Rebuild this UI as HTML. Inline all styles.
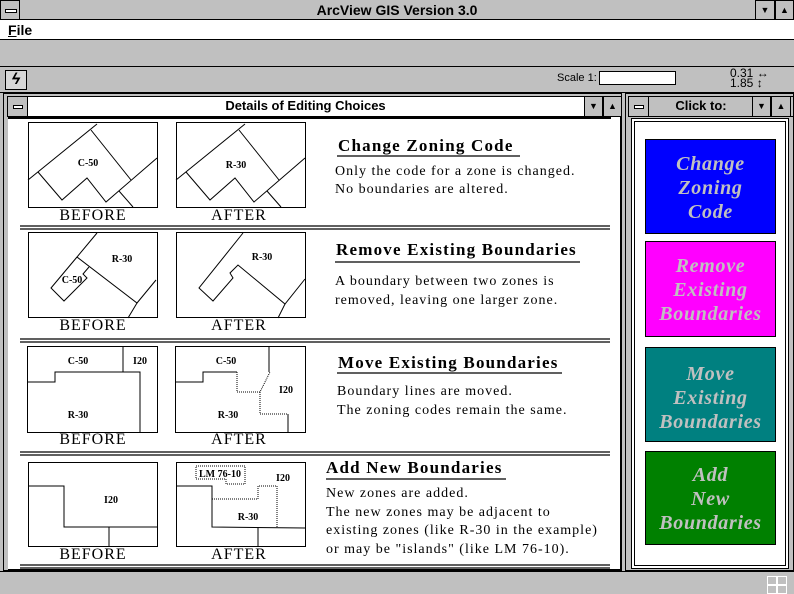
<!DOCTYPE html>
<html><head><style>
body{margin:0;width:794px;height:594px;position:relative;overflow:hidden;background:#c0c0c0;font-family:"Liberation Sans",sans-serif}
.a{position:absolute}
.btn{position:absolute;background:#c0c0c0;border:1px solid #000;box-sizing:border-box}
.t{font-family:"Liberation Serif",serif;font-size:14px;letter-spacing:1px;color:#000;position:absolute;white-space:nowrap}
.h{font-family:"Liberation Serif",serif;font-weight:bold;font-size:17px;letter-spacing:1.2px;position:absolute;white-space:nowrap}
.lb{font-family:"Liberation Serif",serif;font-size:16px;letter-spacing:1px;position:absolute;text-align:center;width:130px}
.cb{position:absolute;left:645px;width:131px;border:1px solid #000;box-sizing:border-box;font-family:"Liberation Serif",serif;font-style:italic;font-weight:bold;font-size:20px;letter-spacing:0.7px;color:#c0c0c0;text-align:center;line-height:24px;padding-top:12px}
</style></head><body>
<div class="a" style="left:0;top:0;width:794px;height:19px;background:#c0c0c0;border-bottom:1px solid #000"></div>
<div class="btn" style="left:0;top:0;width:20px;height:20px"><div class="a" style="left:4px;top:8px;width:10px;height:2px;background:#fff;border:1px solid #000"></div></div>
<div class="a" style="left:0;top:2px;width:794px;text-align:center;font-weight:bold;font-size:14px">ArcView GIS Version 3.0</div>
<div class="btn" style="left:755px;top:0;width:20px;height:20px;text-align:center;font-size:9px;line-height:18px">▼</div>
<div class="btn" style="left:775px;top:0;width:19px;height:20px;text-align:center;font-size:9px;line-height:18px">▲</div>
<div class="a" style="left:0;top:20px;width:794px;height:19px;background:#fff;border-bottom:1px solid #000"></div>
<div class="a" style="left:8px;top:22px;font-size:14px;font-weight:bold"><u>F</u>ile</div>
<div class="a" style="left:0;top:66px;width:794px;height:1px;background:#000"></div>
<div class="a" style="left:0;top:92px;width:794px;height:1px;background:#000"></div>
<div class="btn" style="left:5px;top:70px;width:22px;height:20px;background:#d8d8d8;text-align:center;font-size:16px;font-weight:bold;font-style:italic;line-height:18px">ϟ</div>
<div class="a" style="left:557px;top:72px;font-size:11px">Scale 1:</div>
<div class="a" style="left:599px;top:71px;width:77px;height:14px;background:#fff;border:1px solid #000;box-sizing:border-box"></div>
<div class="a" style="left:730px;top:68px;font-size:12px;line-height:10px">0.31 ↔<br>1.85 ↕</div>
<div class="a" style="left:3px;top:93px;width:619px;height:478px;border:1px solid #000;box-sizing:border-box;background:#c0c0c0"></div>
<div class="a" style="left:7px;top:96px;width:615px;height:21px;background:#fff;border:1px solid #000;box-sizing:border-box"></div>
<div class="btn" style="left:7px;top:96px;width:21px;height:21px"><div class="a" style="left:5px;top:8px;width:8px;height:2px;background:#fff;border:1px solid #000"></div></div>
<div class="a" style="left:28px;top:98px;width:555px;text-align:center;font-weight:bold;font-size:13px">Details of Editing Choices</div>
<div class="btn" style="left:584px;top:96px;width:19px;height:21px;text-align:center;font-size:9px;line-height:19px">▼</div>
<div class="btn" style="left:603px;top:96px;width:19px;height:21px;text-align:center;font-size:9px;line-height:19px">▲</div>
<div class="a" style="left:8px;top:117px;width:612px;height:452px;background:#fff;border-right:1px solid #000;border-bottom:1px solid #000"></div>
<div class="a" style="left:8px;top:117px;width:603px;height:2px;background:#000"></div>
<svg class="a" style="left:0;top:0" width="794" height="594" fill="none" stroke="#000" stroke-width="1">
<g stroke-width="1.3">
<line x1="20" y1="226" x2="610" y2="226"/><line x1="20" y1="229" x2="610" y2="229"/>
<line x1="20" y1="339" x2="610" y2="339"/><line x1="20" y1="342" x2="610" y2="342"/>
<line x1="20" y1="452" x2="610" y2="452"/><line x1="20" y1="455" x2="610" y2="455"/>
<line x1="20" y1="565" x2="610" y2="565"/><line x1="20" y1="568" x2="610" y2="568"/>
</g>
<rect x="28.5" y="122.5" width="129" height="85"/>
<rect x="176.5" y="122.5" width="129" height="85"/>
<rect x="28.5" y="232.5" width="129" height="85"/>
<rect x="176.5" y="232.5" width="129" height="85"/>
<rect x="27.5" y="346.5" width="130" height="86"/>
<rect x="175.5" y="346.5" width="130" height="86"/>
<rect x="28.5" y="462.5" width="129" height="84"/>
<rect x="176.5" y="462.5" width="129" height="84"/>
<g><polyline points="28,180 97,124"/><polyline points="91,130 131,180"/><polyline points="38,172 62,200 87,178 106,202 157,158"/><polyline points="119,191 133,207"/></g>
<g transform="translate(148,0)"><polyline points="28,180 97,124"/><polyline points="91,130 131,180"/><polyline points="38,172 62,200 87,178 106,202 157,158"/><polyline points="119,191 133,207"/></g>
<polyline points="97,233 77,257 137,303 156,280"/><polyline points="137,303 128,318"/>
<polyline points="77,257 51,288 64,301 87,278 83,274 89,267"/>
<polyline points="243,233 199,288 213,301 233,278 230,273 238,265 285,304 305,279"/><polyline points="285,304 278,318"/>
<polyline points="27,382 55,382 55,372 140,372 140,432"/><polyline points="123,346 123,372"/>
<polyline points="176,382 203,382 203,372 237,372"/><polyline points="269,346 269,372"/><polyline points="288,414 288,432"/>
<g stroke-dasharray="1,1"><polyline points="237,372 237,392 260,392 270,372"/><polyline points="260,392 260,414 288,414"/>
<polyline points="212,499 258,499 258,486 277,486 277,528"/><polygon points="196,466 245,466 245,484 226,484 226,479 196,479"/></g>
<polyline points="28,486 64,486 64,527 157,527"/><polyline points="109,527 109,546"/>
<polyline points="176,486 212,486 212,527 305,528"/><polyline points="258,527 258,546"/>
<g fill="#000" stroke="none" font-family="Liberation Serif,serif" font-weight="bold" font-size="10" text-anchor="middle">
<text x="88" y="166">C-50</text><text x="236" y="168">R-30</text>
<text x="122" y="262">R-30</text><text x="72" y="283">C-50</text><text x="262" y="260">R-30</text>
<text x="78" y="364">C-50</text><text x="140" y="364">I20</text><text x="78" y="418">R-30</text>
<text x="226" y="364">C-50</text><text x="286" y="393">I20</text><text x="228" y="418">R-30</text>
<text x="111" y="503">I20</text><text x="220" y="477">LM 76-10</text><text x="283" y="481">I20</text><text x="248" y="520">R-30</text>
</g>
<g stroke-width="1.3"><line x1="337" y1="156" x2="520" y2="156"/><line x1="335" y1="262" x2="580" y2="262"/><line x1="337" y1="373" x2="562" y2="373"/><line x1="326" y1="479" x2="506" y2="479"/></g>
</svg>
<div class="lb" style="left:28px;top:207px">BEFORE</div><div class="lb" style="left:174px;top:207px">AFTER</div>
<div class="lb" style="left:28px;top:317px">BEFORE</div><div class="lb" style="left:174px;top:317px">AFTER</div>
<div class="lb" style="left:28px;top:431px">BEFORE</div><div class="lb" style="left:174px;top:431px">AFTER</div>
<div class="lb" style="left:28px;top:546px">BEFORE</div><div class="lb" style="left:174px;top:546px">AFTER</div>
<div class="h" style="left:338px;top:136px">Change Zoning Code</div>
<div class="t" style="left:335px;top:163px;line-height:18px">Only the code for a zone is changed.<br>No boundaries are altered.</div>
<div class="h" style="left:336px;top:240px">Remove Existing Boundaries</div>
<div class="t" style="left:335px;top:272px;line-height:19px">A boundary between two zones is<br>removed, leaving one larger zone.</div>
<div class="h" style="left:338px;top:353px">Move Existing Boundaries</div>
<div class="t" style="left:337px;top:382px;line-height:19px">Boundary lines are moved.<br>The zoning codes remain the same.</div>
<div class="h" style="left:326px;top:458px">Add New Boundaries</div>
<div class="t" style="left:326px;top:485px;line-height:18.5px">New zones are added.<br>The new zones may be adjacent to<br>existing zones (like R-30 in the example)<br>or may be "islands" (like LM 76-10).</div>
<div class="a" style="left:625px;top:93px;width:169px;height:478px;border:1px solid #000;box-sizing:border-box;background:#c0c0c0"></div>
<div class="a" style="left:628px;top:96px;width:166px;height:21px;background:#c0c0c0;border:1px solid #000;box-sizing:border-box"></div>
<div class="btn" style="left:628px;top:96px;width:21px;height:21px"><div class="a" style="left:5px;top:8px;width:8px;height:2px;background:#fff;border:1px solid #000"></div></div>
<div class="a" style="left:649px;top:98px;width:104px;text-align:center;font-weight:bold;font-size:13px">Click to:</div>
<div class="btn" style="left:752px;top:96px;width:19px;height:21px;text-align:center;font-size:9px;line-height:19px">▼</div>
<div class="btn" style="left:771px;top:96px;width:20px;height:21px;text-align:center;font-size:9px;line-height:19px">▲</div>
<div class="a" style="left:631px;top:118px;width:158px;height:451px;background:#fff;border:1px solid #000;box-sizing:border-box"></div>
<div class="a" style="left:634px;top:121px;width:152px;height:445px;border:1px solid #000;box-sizing:border-box"></div>
<div class="cb" style="top:139px;height:95px;background:#0000ff">Change<br>Zoning<br>Code</div>
<div class="cb" style="top:241px;height:96px;background:#ff00ff">Remove<br>Existing<br>Boundaries</div>
<div class="cb" style="top:347px;height:95px;background:#008080;padding-top:14px">Move<br>Existing<br>Boundaries</div>
<div class="cb" style="top:451px;height:94px;background:#008000;padding-top:11px">Add<br>New<br>Boundaries</div>
<div class="a" style="left:0;top:571px;width:794px;height:1px;background:#000"></div>
<div class="a" style="left:767px;top:576px;width:8px;height:7px;border:1px solid #fff"></div>
<div class="a" style="left:777px;top:576px;width:8px;height:7px;border:1px solid #fff"></div>
<div class="a" style="left:767px;top:585px;width:8px;height:7px;border:1px solid #fff"></div>
<div class="a" style="left:777px;top:585px;width:8px;height:7px;border:1px solid #fff"></div>
</body></html>
